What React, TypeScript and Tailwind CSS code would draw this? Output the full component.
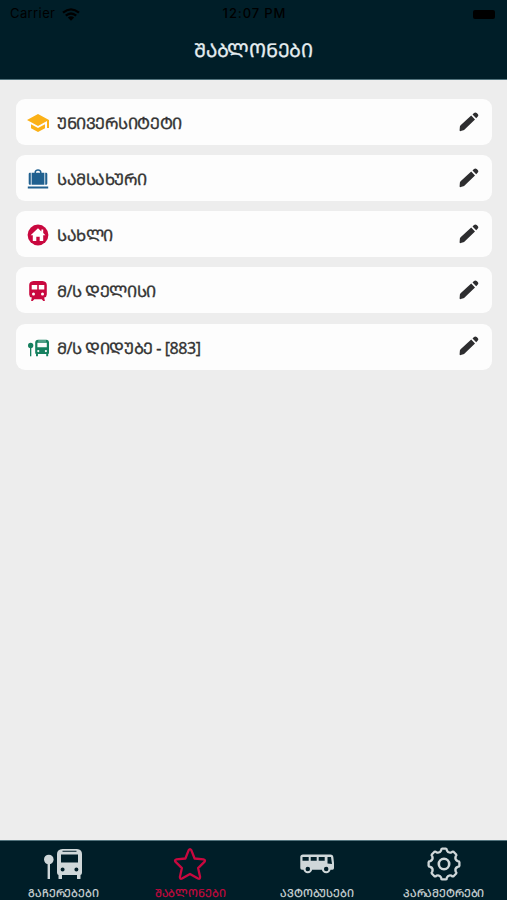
import type { ReactNode } from "react";

const School = () => (
  <svg viewBox="0 0 24 24" className="mt-[2px] size-6" fill="#fbb117">
    <path d="M5 13.180v4L12 21l7-3.820v-4L12 17l-7-3.820zM12 3L1 9l11 6 9-4.910V17h2V9L12 3z" />
  </svg>
);

const Luggage = () => (
  <svg viewBox="0 0 22 22" className="mt-[3px] size-[22px]" fill="#20608f">
    <path d="M7.500 4V2.800Q8 .3 11 .3T14.500 2.800V4H13V3Q12.600 1.800 11 1.800T9 3V4z" />
    <path d="M3.800 3.700H2.900Q1.700 3.700 1.700 5V14.500q0 1.200 1.200 1.200h.9zM4.600 3.700h12.800v12H4.600zM18.200 3.700h.9q1.200 0 1.200 1.300V14.500q0 1.200-1.200 1.200h-.9zM.8 17.500h20.400v2H.8z" />
  </svg>
);

const Home = () => (
  <svg viewBox="0 0 22 22" className="mt-[2px] size-[22px]">
    <circle cx="11" cy="11" r="10.400" fill="#c9083f" />
    <path d="M11 4.200L3.600 11.200H5.800V17H9.300V12.700H12.700V17H16.200V11.200H18.400L16.200 9.100V5.600H14.400V7.400z" fill="#fff" />
  </svg>
);

const Train = () => (
  <svg viewBox="0 0 22 22" className="mt-[2px] size-[22px]">
    <path d="M6.500 1h9Q19.800 1.400 19.800 5v9.500q0 2.600-2.600 3l.7 3.500h-1.600l-1.600-1.800H7.300L5.700 21H4.100l.7-3.500q-2.600-.4-2.600-3V5Q2.200 1.400 6.500 1z" fill="#c9083f" />
    <path d="M4.700 4.900h5.500v4.700H4.700zM11.800 4.900h5.500v4.700h-5.500z" fill="#fff" />
    <circle cx="6.500" cy="14" r="1.500" fill="#fff" />
    <circle cx="15.500" cy="14" r="1.500" fill="#fff" />
  </svg>
);

const BusStop = ({ className }: { className: string }) => (
  <svg viewBox="0 0 38 32" className={className} fill="currentColor">
    <circle cx="4.800" cy="11.500" r="4.800" />
    <path d="M3.600 14h2.400v17H3.600z" />
    <path
      fillRule="evenodd"
      d="M18.500 1h14.500Q38 1.500 38 6v18.500q0 2-1.500 2.500v3.500q0 .5-.5.5h-2.500q-.5 0-.5-.5V27H18v3.500q0 .5-.5.500H15q-.5 0-.5-.5V27q-1.500-.5-1.500-2.500V6q0-4.500 5.500-5zM17 6.500v8h17V6.500zM18.500 2.800v.9h14V2.800zM18.600 19.500a2 2 0 1 0 0 4 2 2 0 0 0 0-4zM32.400 19.500a2 2 0 1 0 0 4 2 2 0 0 0 0-4z"
    />
  </svg>
);

const Star = () => (
  <svg viewBox="0 0 34 34" className="size-[34px]" fill="none" stroke="currentColor" strokeWidth="2.300" strokeLinejoin="round">
    <path d="M15.700 3.200q1.300-2 2.600 0l3.300 8.300 8.900.9q2.500.6.900 2.500l-6.300 6.200 2 8.800q.1 2.500-2.100 1.600L17 26.900l-8 4.600q-2.200.9-2.100-1.600l2-8.800-6.300-6.200q-1.600-1.900.9-2.500l8.900-.9z" />
  </svg>
);

const Bus = () => (
  <svg viewBox="0 0 34 20" className="h-5 w-[34px]" fill="currentColor">
    <path
      fillRule="evenodd"
      d="M3 .5h27.500q2.500 0 2.800 2.200L34 9v5q0 1.800-1.500 1.800H2Q.3 15.800.3 14V3Q.3.500 3 .5zM2.500 3v3.800h6.200V3zM10.700 3v3.800h6V3zM18.700 3v3.800h6V3zM27.500 3V9.500l4.500.5-1-7z"
    />
    <circle cx="7.800" cy="15" r="3.300" fill="#001e28" stroke="currentColor" strokeWidth="2.100" />
    <circle cx="26.200" cy="15" r="3.300" fill="#001e28" stroke="currentColor" strokeWidth="2.100" />
  </svg>
);

const Gear = () => {
  const point = (deg: number, r: number) => {
    const a = (deg * Math.PI) / 180;
    return `${(17 + r * Math.sin(a)).toFixed(2)} ${(17 - r * Math.cos(a)).toFixed(2)}`;
  };
  const d = Array.from({ length: 8 }, (_, k) => {
    const a = k * 45;
    return `${k ? "L" : "M"}${point(a - 7, 15.5)}L${point(a + 7, 15.5)}Q${point(a + 11, 15.5)} ${point(a + 12, 13.9)}Q${point(a + 22.5, 11.4)} ${point(a + 33, 13.9)}Q${point(a + 34, 15.5)} ${point(a + 38, 15.5)}`;
  }).join("");
  return (
    <svg viewBox="0 0 34 34" className="size-[34px]" fill="none" stroke="currentColor" strokeWidth="2.300" strokeLinejoin="round">
      <path d={d + "z"} />
      <circle cx="17" cy="17" r="5.200" strokeWidth="2.600" />
    </svg>
  );
};

const Pencil = () => (
  <svg viewBox="0 0 20 20" className="mb-px size-5" fill="#2d2d2f">
    <path d="M.6 18.200L.9 14.600Q1 13.900 1.600 13.300L12.200 3.500L16 7.400L5.600 17.600Q5.100 18.100 4.400 18.300L1.700 19.100Q.6 19.300.6 18.200zM13.500 2.500L15 1.100Q16.400-.2 17.700 1.100L18.700 2.100Q20 3.400 18.600 4.700L17.200 6.200z" />
  </svg>
);

const templates: { icon: ReactNode; name: string }[] = [
  { icon: <School />, name: "ᲣᲜᲘᲕᲔᲠᲡᲘᲢᲔᲢᲘ" },
  { icon: <Luggage />, name: "ᲡᲐᲛᲡᲐᲮᲣᲠᲘ" },
  { icon: <Home />, name: "ᲡᲐᲮᲚᲘ" },
  { icon: <Train />, name: "Მ/Ს ᲓᲔᲚᲘᲡᲘ" },
  { icon: <BusStop className="mt-[3px] h-[18px] w-[21px] text-[#16805f]" />, name: "Მ/Ს ᲓᲘᲓᲣᲑᲔ - [883]" },
];

const tabs: { icon: ReactNode; name: string; active?: boolean }[] = [
  { icon: <BusStop className="h-8 w-[38px]" />, name: "ᲒᲐᲩᲔᲠᲔᲑᲔᲑᲘ" },
  { icon: <Star />, name: "ᲨᲐᲑᲚᲝᲜᲔᲑᲘ", active: true },
  { icon: <Bus />, name: "ᲐᲕᲢᲝᲑᲣᲡᲔᲑᲘ" },
  { icon: <Gear />, name: "ᲞᲐᲠᲐᲛᲔᲢᲠᲔᲑᲘ" },
];

export default function App() {
  return (
    <div className="flex h-[900px] w-full flex-col bg-[#ededed] font-['Noto_Sans',sans-serif]">
      <header className="h-20 shrink-0 border-b border-[#52737d] bg-[#001e28]">
        <div className="grid h-7 grid-cols-3 items-center px-[10px] font-['Inter',sans-serif] text-[13px] text-black">
          <div className="flex items-center gap-[7px]">
            <span className="tracking-[0.4px]">Carrier</span>
            <svg viewBox="0 0 18 13" className="h-[13px] w-[18px]" fill="none" stroke="black" strokeWidth="2.300">
              <path d="M1 4.700Q9-2 17 4.700M3.800 7.700Q9 3.200 14.200 7.700" />
              <path d="M9 12.800L5.800 9.500Q9 7 12.200 9.500z" fill="black" stroke="none" />
            </svg>
          </div>
          <span className="pl-[2px] text-center font-medium tracking-[0.9px]">12:07 PM</span>
          <span className="mr-[2px] h-[9px] w-[22px] justify-self-end rounded-[2px] bg-black" />
        </div>
        <h1 className="pt-[8px] text-center text-[19px] leading-[28px] font-medium tracking-[-0.3px] text-[#e5edf0] [-webkit-text-stroke:0.3px_currentColor]">
          ᲨᲐᲑᲚᲝᲜᲔᲑᲘ
        </h1>
      </header>
      <main className="flex grow flex-col gap-[10.15px] pt-[19px] pr-[15px] pl-4">
        {templates.map((t) => (
          <div key={t.name} className="flex h-[46px] items-center rounded-[9px] bg-[#fdfdfd] pr-[13px] pl-[10px]">
            <div className="flex w-6 justify-center">{t.icon}</div>
            <span className="ml-[7px] grow pt-[2px] text-[16px] leading-6 tracking-[-0.45px] whitespace-pre text-[#333] [-webkit-text-stroke:0.35px_currentColor]">
              {t.name}
            </span>
            <Pencil />
          </div>
        ))}
      </main>
      <nav className="grid h-[60px] shrink-0 grid-cols-4 border-t border-[#52737d] bg-[#001e28]">
        {tabs.map((t) => (
          <div key={t.name} className={`flex flex-col items-center ${t.active ? "text-[#c9083f]" : "text-[#cfd7d9]"}`}>
            <div className="flex h-[45px] items-center">{t.icon}</div>
            <span className="-mt-px text-[11px] leading-[15px] tracking-[-0.15px] whitespace-nowrap [-webkit-text-stroke:0.2px_currentColor]">{t.name}</span>
          </div>
        ))}
      </nav>
    </div>
  );
}
